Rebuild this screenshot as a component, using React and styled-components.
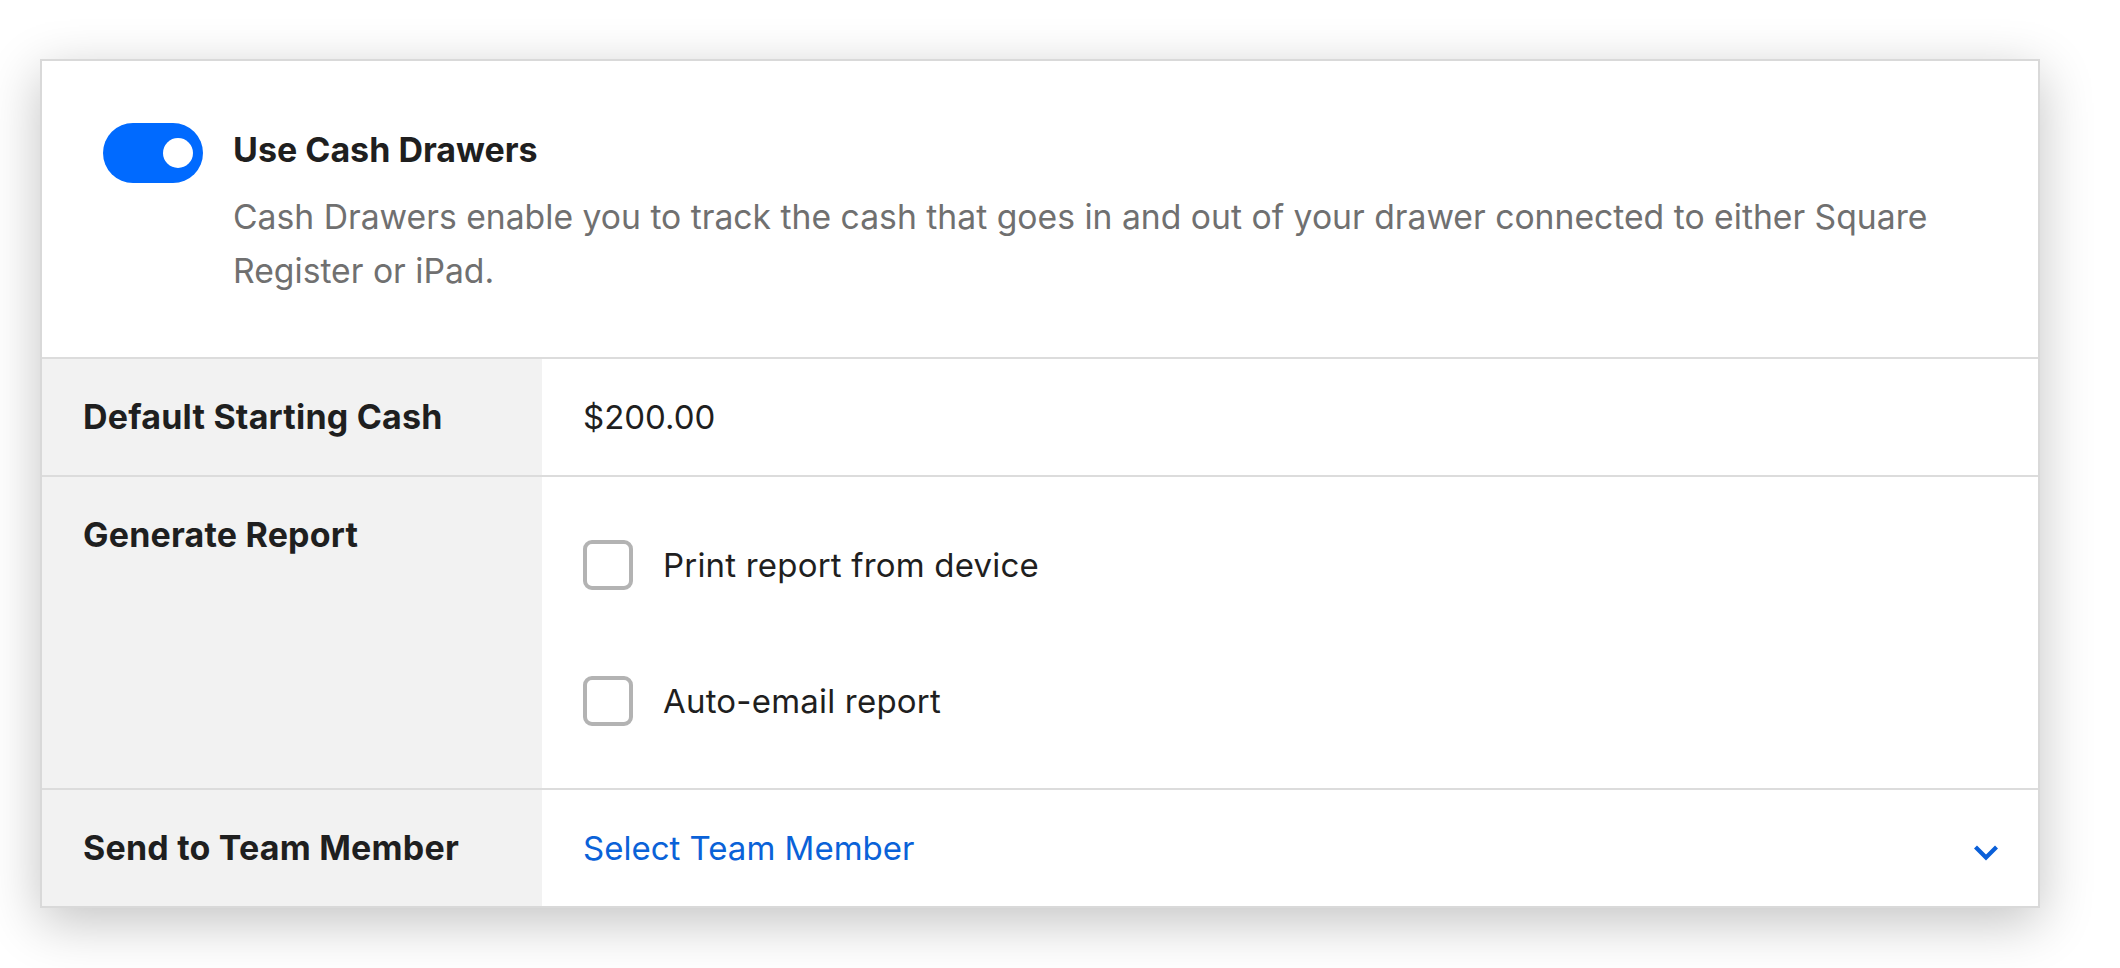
import React, { useState } from 'react';
import styled, { createGlobalStyle } from 'styled-components';

const GlobalStyle = createGlobalStyle`
  html, body {
    margin: 0;
    background: #ffffff;
    font-family: Inter, "Noto Sans", sans-serif;
    color: #1f1f1f;
  }
`;

const Page = styled.div`
  min-height: 100vh;
  box-sizing: border-box;
  padding: 59px 0 61px 40px;
`;

const Card = styled.div`
  width: 2000px;
  box-sizing: border-box;
  background: #fff;
  border: 2px solid #d9d9d9;
  box-shadow: 0 14px 50px rgba(0, 0, 0, 0.24);
`;

const Header = styled.div`
  display: flex;
  align-items: flex-start;
  gap: 30px;
  padding: 62px 62px 59px 61px;
`;

const Toggle = styled.button`
  flex: none;
  width: 100px;
  height: 60px;
  border: none;
  border-radius: 30px;
  background: ${(p) => (p.on ? '#006aff' : '#cccccc')};
  display: flex;
  align-items: center;
  justify-content: ${(p) => (p.on ? 'flex-end' : 'flex-start')};
  padding: 0 10px;
  cursor: pointer;
`;

const Knob = styled.span`
  width: 30px;
  height: 30px;
  border-radius: 50%;
  background: #fff;
`;

const HeaderText = styled.div`
  padding-top: 5px;
  flex: 1;
`;

const Title = styled.div`
  font-size: 34px;
  line-height: 44px;
  font-weight: 700;
  color: #1f1f1f;
`;

const Description = styled.p`
  margin: 18px 0 0;
  font-size: 33.7px;
  line-height: 54px;
  color: #707070;
`;

const Row = styled.div`
  display: grid;
  grid-template-columns: 500px 1fr;
  border-top: 2px solid #dcdcdc;
`;

const Label = styled.div`
  background: #f2f2f2;
  padding: 36px 41px;
  font-size: 34px;
  line-height: 44px;
  font-weight: 700;
  letter-spacing: 0.2px;
  color: #1f1f1f;
`;

const Value = styled.div`
  padding: ${(p) => (p.tall ? '63px 41px 62px' : '36px 39px 36px 41px')};
  font-size: 33px;
  line-height: 44px;
  color: #1f1f1f;
  display: flex;
  flex-direction: ${(p) => (p.tall ? 'column' : 'row')};
  align-items: ${(p) => (p.tall ? 'flex-start' : 'center')};
  justify-content: space-between;
  gap: 86px;
`;

const Option = styled.label`
  display: flex;
  align-items: center;
  gap: 30px;
  letter-spacing: 0.2px;
  cursor: pointer;
`;

const Box = styled.span`
  width: 50px;
  height: 50px;
  box-sizing: border-box;
  border: 4px solid ${(p) => (p.checked ? '#006aff' : '#b3b3b3')};
  background: ${(p) => (p.checked ? '#006aff' : '#fff')};
  border-radius: 9px;
`;

const SelectLink = styled.span`
  color: #0a62d8;
`;

const Chevron = styled.svg`
  margin-top: 8px;
  width: 26px;
  height: 17px;
`;

const App = () => {
  const [enabled, setEnabled] = useState(true);
  const [opts, setOpts] = useState({ print: false, email: false });
  const flip = (k) => setOpts({ ...opts, [k]: !opts[k] });

  return (
    <Page>
      <GlobalStyle />
      <Card>
        <Header>
          <Toggle on={enabled ? 1 : 0} onClick={() => setEnabled(!enabled)}>
            <Knob />
          </Toggle>
          <HeaderText>
            <Title>Use Cash Drawers</Title>
            <Description>
              Cash Drawers enable you to track the cash that goes in and out of your drawer connected to either Square Register or iPad.
            </Description>
          </HeaderText>
        </Header>
        <Row>
          <Label>Default Starting Cash</Label>
          <Value>$200.00</Value>
        </Row>
        <Row>
          <Label>Generate Report</Label>
          <Value tall={1}>
            <Option onClick={() => flip('print')}>
              <Box checked={opts.print} />
              Print report from device
            </Option>
            <Option onClick={() => flip('email')}>
              <Box checked={opts.email} />
              Auto-email report
            </Option>
          </Value>
        </Row>
        <Row>
          <Label>Send to Team Member</Label>
          <Value>
            <SelectLink>Select Team Member</SelectLink>
            <Chevron viewBox="0 0 26 17">
              <path d="M2.5 3 L13 13.5 L23.5 3" fill="none" stroke="#0a5fd8" strokeWidth="4.2" />
            </Chevron>
          </Value>
        </Row>
      </Card>
    </Page>
  );
};

export default App;
